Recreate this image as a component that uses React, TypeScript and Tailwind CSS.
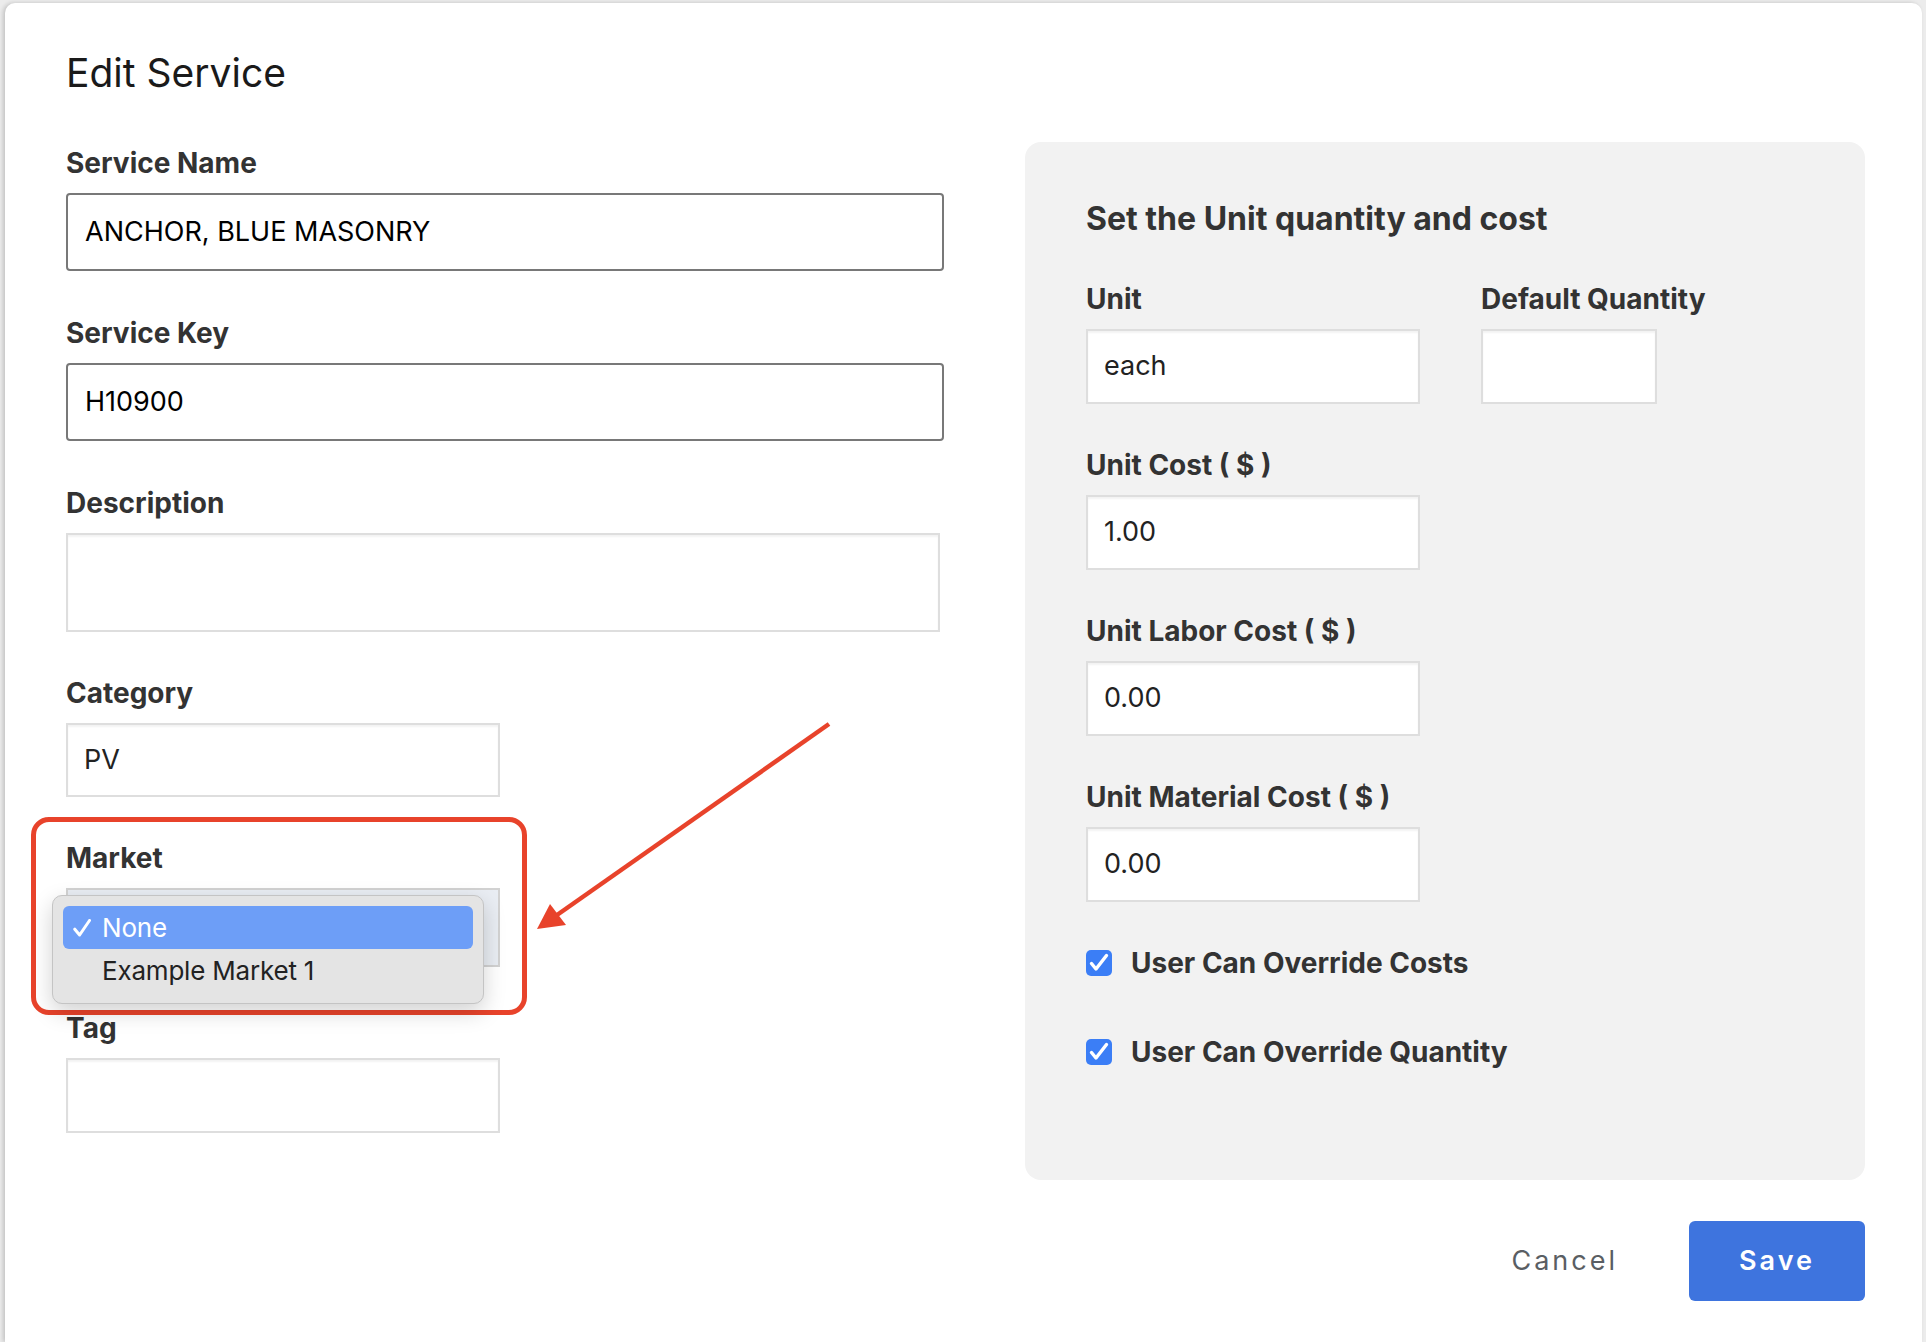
import React from 'react';

const font = { fontFamily: 'Inter, "Noto Sans", sans-serif' };

function Label({ children }: { children: React.ReactNode }) {
  return <div className="text-[28px] font-bold leading-[32px] text-[#333]">{children}</div>;
}

function DarkInput({ value }: { value: string }) {
  return (
    <div className="mt-[14px] flex h-[78px] w-[878px] items-center rounded-[4px] border-2 border-[#787878] bg-white pl-[17px] text-[27px] text-black">
      {value}
    </div>
  );
}

function LightInput({ value = '', className = '' }: { value?: string; className?: string }) {
  return (
    <div
      className={`mt-[14px] flex items-center border-2 border-[#dedede] bg-white pl-[16px] text-[27px] text-[#222] shadow-[inset_0_2px_2px_rgba(0,0,0,0.05)] ${className}`}
    >
      {value}
    </div>
  );
}

function CheckBox() {
  return (
    <div className="flex h-[26px] w-[26px] shrink-0 items-center justify-center rounded-[5px] bg-[#3b7ef6]">
      <svg width="26" height="26" viewBox="0 0 26 26" fill="none">
        <path d="M5.5 13.5 L10 19 L20.5 5.5" stroke="white" strokeWidth="3.4" strokeLinecap="round" strokeLinejoin="round" />
      </svg>
    </div>
  );
}

export default function App() {
  return (
    <div className="min-h-screen bg-[#ececec] pl-[5px] pr-[4px] pt-[3px]" style={font}>
      <div className="relative min-h-[1339px] rounded-t-[10px] bg-white pl-[61px] pr-[57px] pt-[46px] shadow-[-2px_0_4px_rgba(0,0,0,0.18)]">
        <h1 className="text-[39px] font-normal leading-[48px] text-[#1a1a1a]">Edit Service</h1>

        <div className="mt-[45px] flex items-start gap-[81px]">
          {/* left column */}
          <div className="w-[878px] pt-[5px]">
            <Label>Service Name</Label>
            <DarkInput value="ANCHOR, BLUE MASONRY" />

            <div className="mt-[46px]">
              <Label>Service Key</Label>
              <DarkInput value="H10900" />
            </div>

            <div className="mt-[46px]">
              <Label>Description</Label>
              <LightInput className="h-[99px] w-[874px]" />
            </div>

            <div className="mt-[45px]">
              <Label>Category</Label>
              <LightInput value="PV" className="h-[74px] w-[434px]" />
            </div>

            <div className="mt-[45px]">
              <Label>Market</Label>
              <div className="relative mt-[14px] h-[79px] w-[434px] border-2 border-[#d2d2d2] bg-[#e9edf3]">
                <div className="absolute left-[-16px] top-[5px] z-10 h-[109px] w-[432px] rounded-[10px] border border-[#c4c4c4] bg-[#e4e4e4] px-[10px] pt-[10px] shadow-[0_8px_22px_rgba(0,0,0,0.18)]">
                  <div className="flex h-[43px] items-center rounded-[6px] bg-[#6d9ef7] pl-[10px] text-[26px] tracking-[-0.2px] text-white">
                    <svg className="mr-[11px] shrink-0" width="18" height="18" viewBox="0 0 18 18" fill="none">
                      <path d="M1.8 10.2 L6.6 16 L16.5 1.5" stroke="white" strokeWidth="3" strokeLinecap="round" strokeLinejoin="round" />
                    </svg>
                    <span>None</span>
                  </div>
                  <div className="flex h-[43px] items-center pl-[39px] text-[26px] tracking-[-0.2px] text-[#222]">
                    Example Market 1
                  </div>
                </div>
              </div>
            </div>

            <div className="mt-[45px]">
              <Label>Tag</Label>
              <LightInput className="h-[75px] w-[434px]" />
            </div>
          </div>

          {/* right panel */}
          <div className="flex-1">
            <div className="rounded-[16px] bg-[#f2f2f2] pb-[112px] pl-[61px] pt-[57px]">
              <div className="text-[32px] font-bold leading-[40px] text-[#333]">Set the Unit quantity and cost</div>

              <div className="mt-[44px] flex gap-[61px]">
                <div>
                  <Label>Unit</Label>
                  <LightInput value="each" className="h-[75px] w-[334px]" />
                </div>
                <div>
                  <Label>Default Quantity</Label>
                  <LightInput className="h-[75px] w-[176px]" />
                </div>
              </div>

              <div className="mt-[45px]">
                <Label>Unit Cost ( $ )</Label>
                <LightInput value="1.00" className="h-[75px] w-[334px]" />
              </div>

              <div className="mt-[45px]">
                <Label>Unit Labor Cost ( $ )</Label>
                <LightInput value="0.00" className="h-[75px] w-[334px]" />
              </div>

              <div className="mt-[45px]">
                <Label>Unit Material Cost ( $ )</Label>
                <LightInput value="0.00" className="h-[75px] w-[334px]" />
              </div>

              <div className="mt-[45px] flex items-center gap-[19px]">
                <CheckBox />
                <Label>User Can Override Costs</Label>
              </div>
              <div className="mt-[57px] flex items-center gap-[19px]">
                <CheckBox />
                <Label>User Can Override Quantity</Label>
              </div>
            </div>

            <div className="mt-[41px] flex items-center justify-end gap-[71px]">
              <button type="button" className="text-[27px] tracking-[3px] text-[#5a5e63]">
                Cancel
              </button>
              <button
                type="button"
                className="flex h-[80px] w-[176px] items-center justify-center rounded-[6px] bg-[#3e74de] text-[27px] font-semibold tracking-[3px] text-white"
              >
                Save
              </button>
            </div>
          </div>
        </div>

        {/* annotation overlays */}
        <div className="pointer-events-none absolute left-[26px] top-[814px] h-[198px] w-[496px] rounded-[18px] border-[5px] border-[#e8432b]" />
        <svg className="pointer-events-none absolute left-0 top-0" width="900" height="1000" viewBox="0 0 900 1000">
          <line x1="824" y1="721" x2="552" y2="912" stroke="#e8432b" strokeWidth="4.5" />
          <polygon points="532,926 545,901 561,922" fill="#e8432b" />
        </svg>
      </div>
    </div>
  );
}
